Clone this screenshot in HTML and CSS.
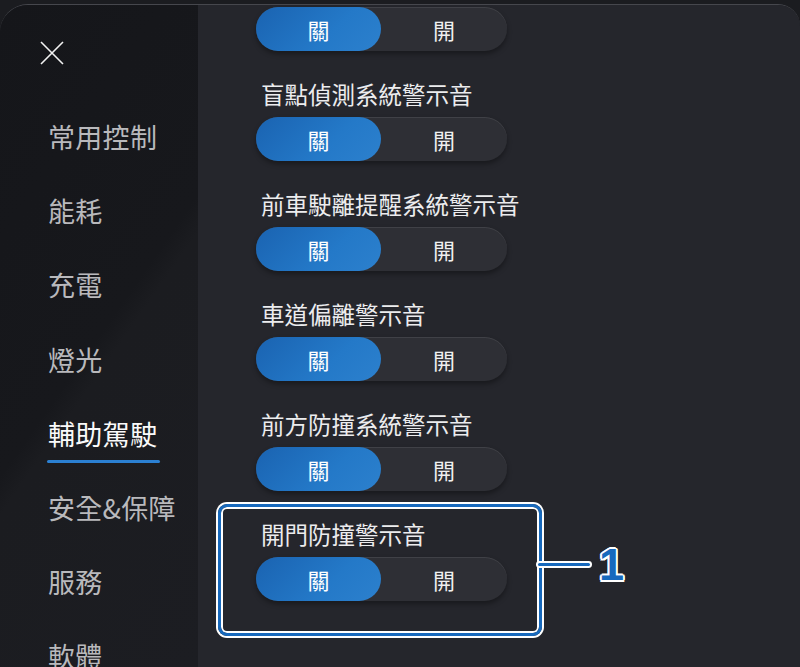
FILE: index.html
```html
<!DOCTYPE html>
<html lang="zh-Hant">
<head>
  <meta charset="UTF-8" />
  <title>輔助駕駛</title>
  <link rel="stylesheet" href="styles.css">
</head>
<body>
  <div class="panel">
    <!-- Side menu -->
    <div class="sidebar">
      <button class="close" aria-label="close">
        <svg width="24" height="24" viewBox="0 0 24 24"><path d="M1 1 L23 23 M23 1 L1 23" stroke="#f2f2f2" stroke-width="1.6" fill="none"/></svg>
      </button>
      <ul class="menu">
        <li>常用控制</li>
        <li>能耗</li>
        <li>充電</li>
        <li>燈光</li>
        <li class="active">輔助駕駛</li>
        <li>安全&amp;保障</li>
        <li>服務</li>
        <li>軟體</li>
      </ul>
    </div>

    <!-- Settings list -->
    <div class="content">
      <div class="switch"><span class="on">關</span><span>開</span></div>

      <div class="row">
        <div class="label">盲點偵測系統警示音</div>
        <div class="switch"><span class="on">關</span><span>開</span></div>
      </div>
      <div class="row">
        <div class="label">前車駛離提醒系統警示音</div>
        <div class="switch"><span class="on">關</span><span>開</span></div>
      </div>
      <div class="row">
        <div class="label">車道偏離警示音</div>
        <div class="switch"><span class="on">關</span><span>開</span></div>
      </div>
      <div class="row">
        <div class="label">前方防撞系統警示音</div>
        <div class="switch"><span class="on">關</span><span>開</span></div>
      </div>
      <div class="row marked">
        <div class="label">開門防撞警示音</div>
        <div class="switch"><span class="on">關</span><span>開</span></div>
        <div class="callout"><span class="line"></span><span class="num">1</span></div>
      </div>
    </div>
  </div>
</body>
</html>
```

FILE: styles.css
```css
* {
  margin: 0;
  padding: 0;
  box-sizing: border-box;
}
body {
  width: 800px;
  height: 667px;
  overflow: hidden;
  background: #1b1c20;
  font-family: "Noto Sans CJK TC", "Noto Sans", sans-serif;
  padding-top: 4px;
}
.panel {
  display: flex;
  height: 663px;
  border-top: 1px solid #46474d;
  border-radius: 28px 22px 0 0;
  overflow: hidden;
}
.sidebar {
  width: 198px;
  flex-shrink: 0;
  background: linear-gradient(125deg, #15161a 0%, #17181c 50%, #1b1c20 54%, #1c1d22 100%);
  padding: 36px 0 0 40px;
}
.close {
  width: 24px;
  height: 24px;
  background: none;
  border: none;
  display: block;
}
.menu {
  list-style: none;
  margin-top: 35px;
}
.menu li {
  height: 74.2px;
  line-height: 74px;
  padding-left: 8px;
  font-size: 27px;
  color: #b9b9bc;
  letter-spacing: 0.3px;
  position: relative;
  white-space: nowrap;
}
.menu li.active {
  color: #fafafa;
}
.menu li.active::after {
  content: "";
  position: absolute;
  left: 7px;
  top: 63px;
  width: 113px;
  height: 3px;
  border-radius: 2px;
  background: #2b80d2;
}
.content {
  flex: 1;
  background: #25262c;
  padding: 2px 0 0 58px;
}
.switch {
  display: flex;
  width: 251px;
  height: 44px;
  border-radius: 22px;
  background: #2e2f35;
  box-shadow: inset 0 1px 0 rgba(255,255,255,0.09), 0 3px 5px rgba(0,0,0,0.35);
}
.switch span {
  flex: 1;
  display: flex;
  align-items: center;
  justify-content: center;
  font-size: 22px;
  color: #f0f0f0;
}
.switch span.on {
  flex: 0 0 125px;
  border-radius: 22px;
  background: linear-gradient(135deg, #1a63b1 0%, #2479c8 60%, #2c80cd 100%);
  color: #ffffff;
}
.row {
  margin-top: 30px;
  position: relative;
}
.label {
  font-size: 23.5px;
  line-height: 26px;
  margin-bottom: 10px;
  padding-left: 5px;
  color: #ececee;
}
/* annotation frame round the last row */
.marked::before {
  content: "";
  position: absolute;
  left: -38px;
  top: -17px;
  width: 318px;
  height: 126px;
  border: 3px solid #1769bd;
  border-radius: 9px;
  box-shadow: 0 0 0 2px #ffffff, inset 0 0 0 2px #ffffff;
}
.callout {
  position: absolute;
  left: 282px;
  top: 21px;
  display: flex;
  align-items: center;
}
.callout .line {
  width: 52px;
  height: 3px;
  background: #1769bd;
  box-shadow: 0 0 0 2px #ffffff;
  border-radius: 2px;
}
.callout .num {
  margin-left: 9px;
  font-family: "Liberation Sans", Arial, sans-serif;
  font-weight: bold;
  font-size: 45px;
  line-height: 45px;
  color: #1769bd;
  text-shadow: 2px 0 0 #fff, -2px 0 0 #fff, 0 2px 0 #fff, 0 -2px 0 #fff, 1.5px 1.5px 0 #fff, -1.5px -1.5px 0 #fff, 1.5px -1.5px 0 #fff, -1.5px 1.5px 0 #fff;
}
```
